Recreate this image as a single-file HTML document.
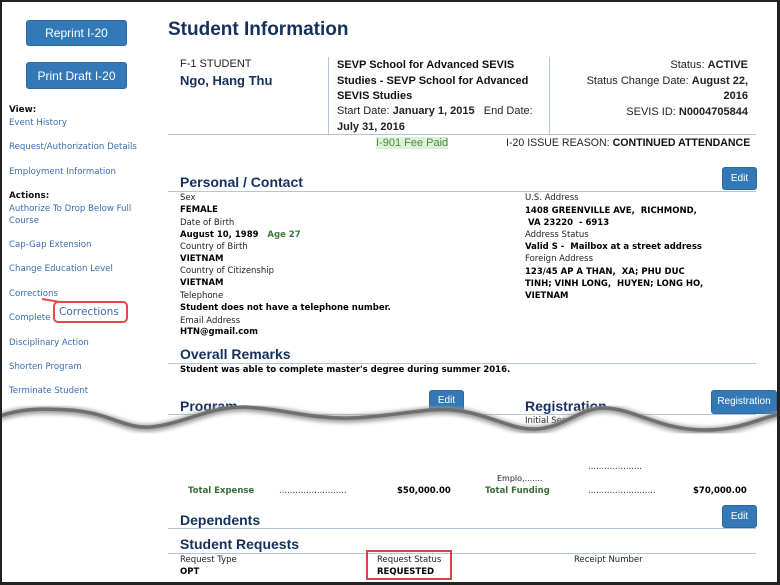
<!DOCTYPE html>
<html><head><style>
*{margin:0;padding:0;box-sizing:border-box}
body{width:780px;height:585px;background:#fff;font-family:"Liberation Sans",sans-serif;position:relative;overflow:hidden}
.frame{position:absolute;left:0;top:0;width:780px;height:585px;border:2px solid #222;border-right-width:3px;border-bottom-width:3px;z-index:50;pointer-events:none}
.a{position:absolute;white-space:nowrap}
.btn{position:absolute;background:#3479b7;color:#fff;border-radius:3px;font-size:12px;text-align:center;border:1px solid #2a6aa3}
.lnk{font-family:"DejaVu Sans",sans-serif;font-size:8.6px;color:#3a6db0;position:absolute;white-space:nowrap}
.lb{font-family:"DejaVu Sans",sans-serif;font-size:8.8px;color:#111;font-weight:bold;position:absolute}
.h{position:absolute;font-weight:bold;color:#15305e;font-size:14px;white-space:nowrap}
.line{position:absolute;height:1px;background:#b5c4d6}
.s{font-family:"DejaVu Sans",sans-serif;font-size:8.5px;color:#222;position:absolute;white-space:nowrap}
.sb{font-family:"DejaVu Sans",sans-serif;font-size:8.5px;color:#000;font-weight:bold;position:absolute;white-space:nowrap}
.m{font-size:11px;color:#222;position:absolute;white-space:nowrap}
.mb{font-size:11px;color:#111;font-weight:bold}
</style></head><body>
<div class="frame"></div>
<div class="btn" style="left:26px;top:20px;width:101px;height:26px;line-height:25px">Reprint I-20</div>
<div class="btn" style="left:26px;top:62px;width:101px;height:27px;line-height:26px">Print Draft I-20</div>
<div class="lb" style="left:9px;top:105px">View:</div>
<div class="lnk" style="left:9px;top:118px">Event History</div>
<div class="lnk" style="left:9px;top:142px">Request/Authorization Details</div>
<div class="lnk" style="left:9px;top:167px">Employment Information</div>
<div class="lb" style="left:9px;top:191px">Actions:</div>
<div class="lnk" style="left:9px;top:204px">Authorize To Drop Below Full</div>
<div class="lnk" style="left:9px;top:216px">Course</div>
<div class="lnk" style="left:9px;top:240px">Cap-Gap Extension</div>
<div class="lnk" style="left:9px;top:264px">Change Education Level</div>
<div class="lnk" style="left:9px;top:289px">Corrections</div>
<div class="lnk" style="left:9px;top:313px">Complete</div>
<div class="lnk" style="left:9px;top:338px">Disciplinary Action</div>
<div class="lnk" style="left:9px;top:362px">Shorten Program</div>
<div class="lnk" style="left:9px;top:386px">Terminate Student</div>
<svg class="a" style="left:0;top:0" width="160" height="340"><line x1="42" y1="299" x2="60" y2="302" stroke="#e04a4a" stroke-width="2"/></svg>
<div class="a" style="left:53px;top:301px;width:75px;height:22px;border:2px solid #e04a4a;border-radius:5px;background:#fff;font-family:'DejaVu Sans',sans-serif;font-size:10.5px;color:#3a6db0;line-height:18px;padding-left:4px">Corrections</div>

<div class="h" style="left:168px;top:19px;font-size:19px">Student Information</div>
<div class="m" style="left:180px;top:58px">F-1 STUDENT</div>
<div class="a" style="left:180px;top:73px;font-size:13px;font-weight:bold;color:#15305e">Ngo, Hang Thu</div>
<div class="a" style="left:328px;top:57px;width:1px;height:78px;background:#b5c4d6"></div>
<div class="a" style="left:549px;top:57px;width:1px;height:78px;background:#b5c4d6"></div>
<div class="a" style="left:337px;top:58px;font-size:11px;font-weight:bold;line-height:15.5px;color:#111">SEVP School for Advanced SEVIS<br>Studies - SEVP School for Advanced<br>SEVIS Studies</div>
<div class="a" style="left:337px;top:104px;font-size:11px;line-height:15.5px;color:#222">Start Date: <b>January 1, 2015</b>&nbsp;&nbsp; End Date:<br><b>July 31, 2016</b></div>
<div class="a" style="left:560px;top:58px;width:188px;text-align:right;font-size:11px;line-height:15.5px;color:#222;white-space:normal">Status: <b>ACTIVE</b><br>Status Change Date: <b>August 22,<br>2016</b><br>SEVIS ID: <b>N0004705844</b></div>
<div class="line" style="left:168px;top:134px;width:588px"></div>
<div class="a" style="left:376px;top:137px;font-size:11px;color:#4c8a3c;background:#dff0d8">I-901 Fee Paid</div>
<div class="m" style="left:506px;top:137px;font-size:10.6px">I-20 ISSUE REASON: <span class="mb" style="font-size:10.6px">CONTINUED ATTENDANCE</span></div>

<div class="btn" style="left:722px;top:167px;width:35px;height:23px;line-height:21px;font-size:10px">Edit</div>
<div class="h" style="left:180px;top:174px">Personal / Contact</div>
<div class="line" style="left:168px;top:191px;width:588px"></div>
<div class="s" style="left:180px;top:193px">Sex</div>
<div class="sb" style="left:180px;top:205px">FEMALE</div>
<div class="s" style="left:180px;top:218px">Date of Birth</div>
<div class="sb" style="left:180px;top:230px">August 10, 1989 &nbsp;&nbsp;<span style="color:#3d7a3a">Age 27</span></div>
<div class="s" style="left:180px;top:242px">Country of Birth</div>
<div class="sb" style="left:180px;top:254px">VIETNAM</div>
<div class="s" style="left:180px;top:266px">Country of Citizenship</div>
<div class="sb" style="left:180px;top:278px">VIETNAM</div>
<div class="s" style="left:180px;top:291px">Telephone</div>
<div class="sb" style="left:180px;top:303px">Student does not have a telephone number.</div>
<div class="s" style="left:180px;top:316px">Email Address</div>
<div class="sb" style="left:180px;top:327px">HTN@gmail.com</div>
<div class="s" style="left:525px;top:193px">U.S. Address</div>
<div class="sb" style="left:525px;top:205px;line-height:12px">1408 GREENVILLE AVE, &nbsp;RICHMOND,<br>&nbsp;VA 23220 &nbsp;- 6913</div>
<div class="s" style="left:525px;top:230px">Address Status</div>
<div class="sb" style="left:525px;top:242px">Valid S - &nbsp;Mailbox at a street address</div>
<div class="s" style="left:525px;top:254px">Foreign Address</div>
<div class="sb" style="left:525px;top:266px;line-height:12px">123/45 AP A THAN, &nbsp;XA; PHU DUC<br>TINH; VINH LONG, &nbsp;HUYEN; LONG HO,<br>VIETNAM</div>
<div class="h" style="left:180px;top:346px">Overall Remarks</div>
<div class="line" style="left:168px;top:363px;width:588px"></div>
<div class="sb" style="left:180px;top:365px">Student was able to complete master's degree during summer 2016.</div>
<div class="btn" style="left:429px;top:390px;width:35px;height:22px;line-height:20px;font-size:10px">Edit</div>
<div class="btn" style="left:711px;top:390px;width:66px;height:24px;line-height:22px;font-size:10px">Registration</div>
<div class="h" style="left:180px;top:398px">Program</div>
<div class="h" style="left:525px;top:398px">Registration</div>
<div class="line" style="left:168px;top:414px;width:588px"></div>
<div class="s" style="left:525px;top:416px">Initial Session</div>

<svg class="a" style="left:0;top:397px;z-index:10" width="780" height="90">
<defs><filter id="sh"><feGaussianBlur stdDeviation="2"/></filter></defs>
<path d="M0,19 C20,12 40,11 70,13 C110,16 125,32 150,30 C180,28 210,9 245,10 C285,12 310,22 350,21 C380,20 400,16 430,13 C480,9 505,33 535,32 C565,31 580,10 605,11 C635,12 660,33 705,33 C740,33 760,21 780,17 L780,90 L0,90 Z" fill="#fff"/>
<path d="M0,20 C20,13 40,12 70,14 C110,17 125,33 150,31 C180,29 210,10 245,11 C285,13 310,23 350,22 C380,21 400,17 430,14 C480,10 505,34 535,33 C565,32 580,11 605,12 C635,13 660,34 705,34 C740,34 760,22 780,18" fill="none" stroke="#999" stroke-width="7" filter="url(#sh)"/>
<path d="M0,19 C20,12 40,11 70,13 C110,16 125,32 150,30 C180,28 210,9 245,10 C285,12 310,22 350,21 C380,20 400,16 430,13 C480,9 505,33 535,32 C565,31 580,10 605,11 C635,12 660,33 705,33 C740,33 760,21 780,17" fill="none" stroke="#6f6f6f" stroke-width="3.5"/>
</svg>

<div class="s" style="left:588px;top:462px;z-index:11">....................</div>
<div class="s" style="left:497px;top:474px;z-index:11;font-size:8px">Emplo,.......</div>
<div class="sb" style="left:188px;top:486px;color:#3d6b3a;z-index:11">Total Expense</div>
<div class="s" style="left:279px;top:486px;z-index:11">.........................</div>
<div class="sb" style="left:397px;top:486px;z-index:11">$50,000.00</div>
<div class="sb" style="left:485px;top:486px;color:#3d6b3a;z-index:11">Total Funding</div>
<div class="s" style="left:588px;top:486px;z-index:11">.........................</div>
<div class="sb" style="left:693px;top:486px;z-index:11">$70,000.00</div>
<div class="btn" style="left:722px;top:505px;width:35px;height:23px;line-height:21px;font-size:10px">Edit</div>
<div class="h" style="left:180px;top:512px">Dependents</div>
<div class="line" style="left:168px;top:528px;width:588px"></div>
<div class="h" style="left:180px;top:536px">Student Requests</div>
<div class="line" style="left:168px;top:553px;width:588px"></div>
<div class="s" style="left:180px;top:555px">Request Type</div>
<div class="sb" style="left:180px;top:567px">OPT</div>
<div class="a" style="left:366px;top:550px;width:86px;height:30px;border:2px solid #d84444"></div>
<div class="s" style="left:377px;top:555px">Request Status</div>
<div class="sb" style="left:377px;top:567px">REQUESTED</div>
<div class="s" style="left:574px;top:555px">Receipt Number</div>
</body></html>
